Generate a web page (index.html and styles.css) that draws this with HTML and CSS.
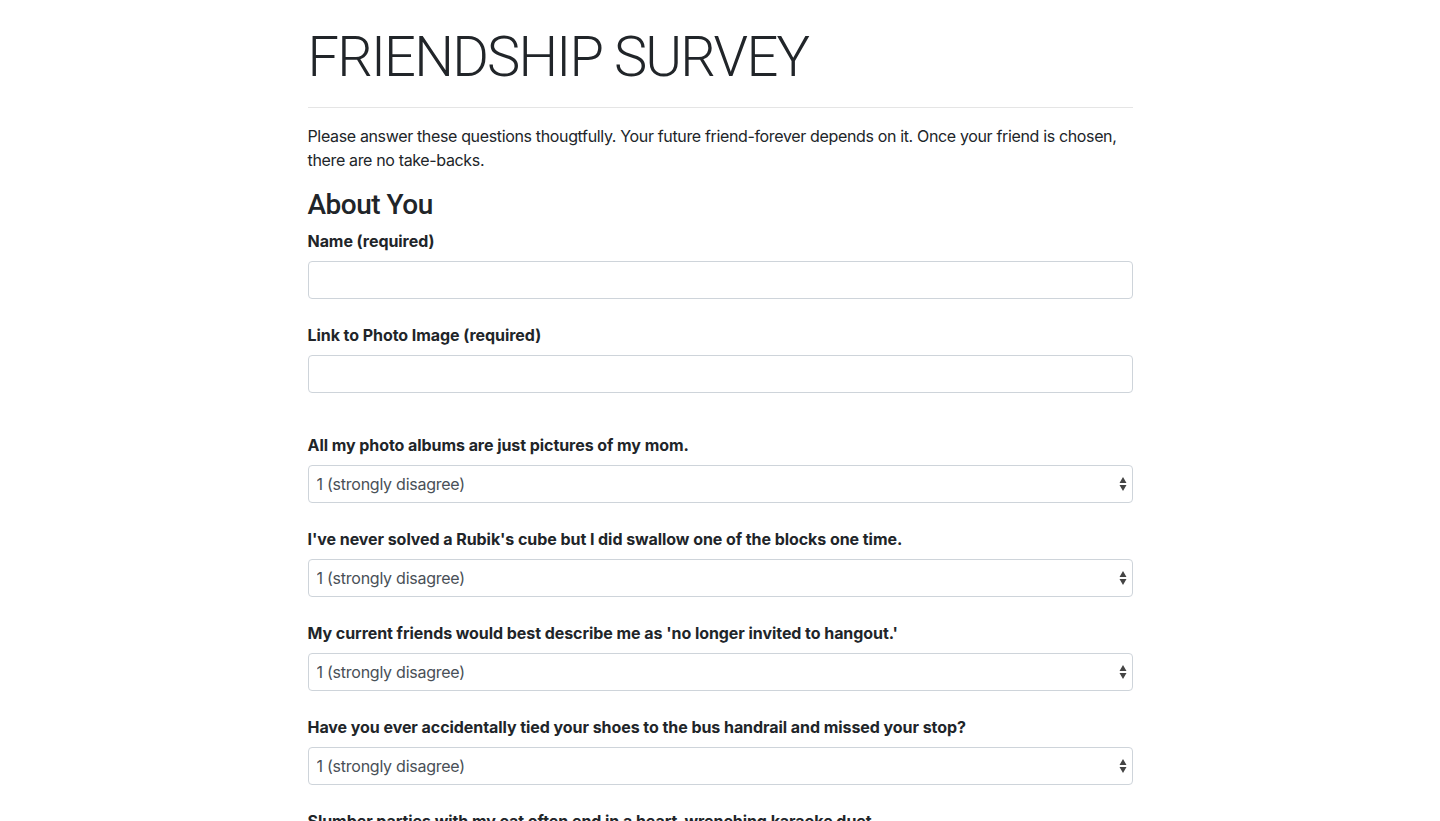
FILE: index.html
```html
<!DOCTYPE html>
<html lang="en">
<head>
<meta charset="utf-8">
<title>Friendship Survey</title>
<link rel="stylesheet" href="styles.css">
</head>
<body>
<div class="container">
  <h1 class="title">FRIENDSHIP SURVEY</h1>
  <hr class="rule">
  <p class="intro">Please answer these questions thougtfully. Your future friend-forever depends on it. Once your friend is chosen, there are no take-backs.</p>
  <h3 class="section">About You</h3>
  <form>
    <div class="group">
      <label class="label" for="name">Name (required)</label>
      <input class="field" id="name" type="text">
    </div>
    <div class="group group-last">
      <label class="label" for="photo">Link to Photo Image (required)</label>
      <input class="field" id="photo" type="text">
    </div>

    <div class="group">
      <label class="label" for="q1">All my photo albums are just pictures of my mom.</label>
      <div class="select-wrap">
        <select class="field select" id="q1"><option>1 (strongly disagree)</option><option>2</option><option>3</option><option>4</option><option>5 (strongly agree)</option></select>
        <svg class="arrows" width="8" height="14" viewBox="0 0 8 14"><path d="M4 0 L7.5 6 L0.5 6 Z M4 14 L7.5 8 L0.5 8 Z" fill="#444"/></svg>
      </div>
    </div>
    <div class="group">
      <label class="label" for="q2">I've never solved a Rubik's cube but I did swallow one of the blocks one time.</label>
      <div class="select-wrap">
        <select class="field select" id="q2"><option>1 (strongly disagree)</option><option>2</option><option>3</option><option>4</option><option>5 (strongly agree)</option></select>
        <svg class="arrows" width="8" height="14" viewBox="0 0 8 14"><path d="M4 0 L7.5 6 L0.5 6 Z M4 14 L7.5 8 L0.5 8 Z" fill="#444"/></svg>
      </div>
    </div>
    <div class="group">
      <label class="label" for="q3">My current friends would best describe me as 'no longer invited to hangout.'</label>
      <div class="select-wrap">
        <select class="field select" id="q3"><option>1 (strongly disagree)</option><option>2</option><option>3</option><option>4</option><option>5 (strongly agree)</option></select>
        <svg class="arrows" width="8" height="14" viewBox="0 0 8 14"><path d="M4 0 L7.5 6 L0.5 6 Z M4 14 L7.5 8 L0.5 8 Z" fill="#444"/></svg>
      </div>
    </div>
    <div class="group">
      <label class="label" for="q4">Have you ever accidentally tied your shoes to the bus handrail and missed your stop?</label>
      <div class="select-wrap">
        <select class="field select" id="q4"><option>1 (strongly disagree)</option><option>2</option><option>3</option><option>4</option><option>5 (strongly agree)</option></select>
        <svg class="arrows" width="8" height="14" viewBox="0 0 8 14"><path d="M4 0 L7.5 6 L0.5 6 Z M4 14 L7.5 8 L0.5 8 Z" fill="#444"/></svg>
      </div>
    </div>
    <div class="group">
      <label class="label" for="q5">Slumber parties with my cat often end in a heart-wrenching karaoke duet.</label>
      <div class="select-wrap">
        <select class="field select" id="q5"><option>1 (strongly disagree)</option><option>2</option><option>3</option><option>4</option><option>5 (strongly agree)</option></select>
        <svg class="arrows" width="8" height="14" viewBox="0 0 8 14"><path d="M4 0 L7.5 6 L0.5 6 Z M4 14 L7.5 8 L0.5 8 Z" fill="#444"/></svg>
      </div>
    </div>
  </form>
</div>
</body>
</html>
```

FILE: styles.css
```css
* { box-sizing: border-box; }
html, body {
  margin: 0;
  padding: 0;
  background: #fff;
}
body {
  font-family: Inter, Roboto, "Helvetica Neue", Arial, sans-serif;
  font-size: 16px;
  line-height: 24px;
  color: #212529;
}
.container {
  width: 825px;
  margin: 0 auto;
  padding-top: 24px;
}
.title {
  font-family: Roboto, Inter, Arial, sans-serif;
  font-size: 56px;
  font-weight: 300;
  line-height: 67px;
  margin: 0 0 8px;
  letter-spacing: -1.8px;
}
.rule {
  border: 0;
  border-top: 1px solid rgba(0,0,0,0.1);
  margin: 16px 0;
}
.intro {
  margin: 0 0 16px;
  font-size: 16px;
  letter-spacing: -0.35px;
}
.section {
  font-family: Roboto, Inter, Arial, sans-serif;
  font-size: 28px;
  font-weight: 500;
  line-height: 34px;
  margin: 0 0 7px;
  letter-spacing: -0.5px;
}
form { margin: 0; }
.group {
  margin-bottom: 24px;
}
.group-last {
  margin-bottom: 40px;
}
.label {
  display: block;
  font-weight: 700;
  font-size: 16px;
  line-height: 24px;
  margin-bottom: 8px;
  letter-spacing: -0.06px;
}
.field {
  display: block;
  width: 100%;
  height: 38px;
  border: 1px solid #ced4da;
  border-radius: 4px;
  background: #fff;
  font-family: inherit;
  font-size: 16px;
  color: #495057;
  padding: 0 8px;
  outline: none;
  letter-spacing: -0.25px;
}
.select-wrap {
  position: relative;
}
.select {
  appearance: none;
  -webkit-appearance: none;
}
.arrows {
  position: absolute;
  right: 6px;
  top: 12px;
  pointer-events: none;
}
```
